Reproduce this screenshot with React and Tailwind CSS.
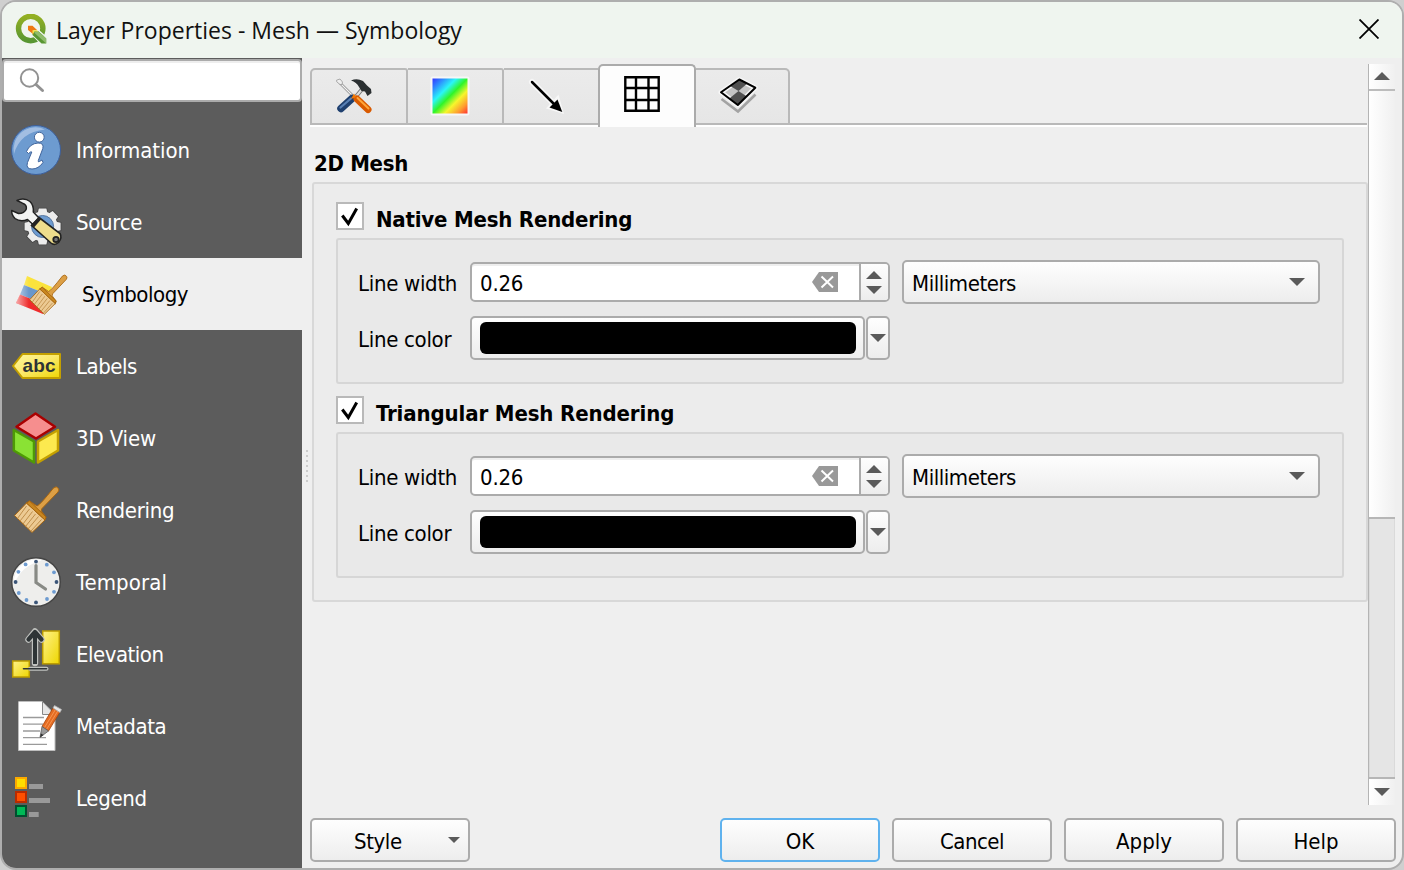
import React from "react";

const OUTLINE = "border-2 border-[#ababab]";
const FACE = "bg-linear-to-b from-[#fefefe] to-[#ededed]";

function Triangle({ up = false, className = "" }) {
  return (
    <svg viewBox="0 0 16 8" className={`w-4 h-2 shrink-0 ${className}`}>
      <path d={up ? "M0 8 8 0 16 8Z" : "M0 0H16L8 8Z"} fill="#5a5a5a" />
    </svg>
  );
}

/* ---------- sidebar icons ---------- */

function InfoIcon() {
  return (
    <g>
      <circle cx="36" cy="36" r="24.5" fill="#6d9bd0" stroke="#3c5f9c" />
      <path d="M14 40A22 22 0 0 1 45 15.5Q20 18 14 40Z" fill="#b4cae8" opacity=".75" />
      <g fill="#fff" stroke="#41659c" strokeWidth="1">
        <circle cx="39.3" cy="23.2" r="4.9" />
        <path d="M26.500 37.500Q30 29.500 38 29Q44.300 29 42.800 34.500L38.300 46.500Q37.800 48.500 39.500 47.500L42 46 43 48.500Q38.500 55 32 55Q25.500 55 27.500 48.500L31.800 38Q31.500 36.800 28.500 39.500Z" />
      </g>
    </g>
  );
}

const TEETH = [0, 45, 90, 135, 180, 225, 270, 315];

function SourceIcon() {
  return (
    <g>
      <g fill="#444" stroke="#444" strokeWidth="1.600">
        <circle cx="42.600" cy="40.500" r="15" />
        {TEETH.map((a) => <path key={a} d="M37.800 27 38.800 22.500H46.400L47.400 27Z" transform={`rotate(${a} 42.600 40.500)`} />)}
      </g>
      <g fill="#ececec">
        <circle cx="42.600" cy="40.500" r="15" />
        {TEETH.map((a) => <path key={a} d="M37.800 27 38.800 22.500H46.400L47.400 27Z" transform={`rotate(${a} 42.600 40.500)`} />)}
      </g>
      <circle cx="42.600" cy="40.500" r="11" fill="#6d9bd0" stroke="#54759f" />
      <path d="M17 14.500Q24 11 30 15.500Q34 19.500 33.300 26L39 32 33 38.500 27.500 33.500Q20.500 36.500 15 32.500Q11.500 29 11.700 24.500L18.500 27.500Q24.500 27.500 26.300 23Q27 18.500 22.500 17.200Z" fill="#f2f3f2" stroke="#222" strokeWidth="1.500" strokeLinejoin="round" />
      <path d="M39 31.500 60 47.500Q62.500 52 58.500 56.500 54.500 60 51 57L31.500 39.500Z" fill="#eedd8c" stroke="#222" strokeWidth="1.600" />
      <path d="M38.500 31.500 41 33.500 34 41.500 31.500 39Z" fill="#222" />
      <circle cx="56" cy="53.500" r="2.700" fill="#777" stroke="#222" strokeWidth="1.800" />
    </g>
  );
}

function Brush() {
  return (
    <g stroke="#a76510" strokeWidth="1">
      <path d="M37 32Q40 31 53.500 14 56.500 11.500 58.500 14.500 59.500 16 58 18L42 34.500Q40.500 36.500 42 38L46 43 45 46 26.500 29 29.500 27 34 30Z" fill="#dc9f45" />
      <path d="M26.500 29 45 46 32 58.500 14.500 41.500Z" fill="#ecca93" />
      <path d="M26.500 29 29.500 27 46 43 45 46Z" fill="#c8861f" />
      <path d="M26.500 32 17.500 44.500M29.500 35 20 47M32.500 37.500 23 50M35.500 40 25.500 52.500M38.500 42.500 28 55M41.500 45.500 31 57" fill="none" stroke="#b98742" strokeWidth=".9" />
    </g>
  );
}

function SymbologyIcon() {
  return (
    <g>
      <defs>
        <linearGradient id="flagFade" x1="0" x2=".6">
          <stop offset="0" stopColor="#fff" stopOpacity=".6" />
          <stop offset=".6" stopColor="#fff" stopOpacity="0" />
        </linearGradient>
      </defs>
      <path d="M27 18 52 29 49 37 24 27Z" fill="#fbe33c" />
      <path d="M24 27 49 37 46 47 20 36.500Z" fill="#6a97cb" />
      <path d="M20 36.500 46 47 43 56 16 45Z" fill="#ee2b2b" />
      <path d="M27 18 52 29 43 56 16 45Z" fill="url(#flagFade)" />
      <g transform="translate(17.500 6) scale(.84 .86)"><Brush /></g>
    </g>
  );
}

function LabelsIcon() {
  return (
    <g>
      <defs>
        <linearGradient id="tagFill" x1="0" y1="0" x2="1" y2="1">
          <stop offset="0" stopColor="#fff6a0" />
          <stop offset=".5" stopColor="#fbe96b" />
          <stop offset="1" stopColor="#eed600" />
        </linearGradient>
      </defs>
      <path d="M13 36 22.500 24H60V48H22.500Z" fill="url(#tagFill)" stroke="#c4a000" strokeWidth="2" strokeLinejoin="round" />
      <text x="39" y="41.600" textAnchor="middle" textLength="33" fontFamily="Liberation Sans, sans-serif" fontWeight="700" fontSize="19" fill="#2e3436">abc</text>
    </g>
  );
}

function CubeIcon() {
  return (
    <g strokeWidth="2.500" strokeLinejoin="round">
      <path d="M13.800 28 34 39.500V60.500L13.800 48.500Z" fill="#8ae234" stroke="#4e9a06" />
      <path d="M58 28 38 39.500V60.500L58 48.500Z" fill="#fce94f" stroke="#c4a000" />
      <path d="M35.500 11.500 55 24.700 36 36.500 16.500 24.700Z" fill="#f68e8e" stroke="#a90000" />
    </g>
  );
}

function ClockIcon() {
  return (
    <g>
      <circle cx="36" cy="36" r="24.300" fill="#eeeeec" stroke="#454545" strokeWidth="1.500" />
      <path d="M14 38A22 22 0 0 1 42 14.500Q22 19 14 38Z" fill="#fff" />
      <g fill="#6d9bd0">
        <circle cx="46.800" cy="18.700" r="1.900" /><circle cx="54" cy="26.300" r="1.900" />
        <circle cx="54" cy="45.800" r="1.900" /><circle cx="47" cy="53" r="1.900" />
        <circle cx="26.500" cy="54" r="1.900" /><circle cx="18.800" cy="47" r="1.900" />
        <circle cx="18.400" cy="25.800" r="1.900" /><circle cx="25.600" cy="18.400" r="1.900" />
      </g>
      <g fill="#3b5578">
        <circle cx="36" cy="15.600" r="1.900" /><circle cx="56.500" cy="36" r="1.900" />
        <circle cx="36" cy="56.400" r="1.900" /><circle cx="15.600" cy="36" r="1.900" />
      </g>
      <path d="M36 19.500V36.500L45.500 43" fill="none" stroke="#888a85" strokeWidth="3.200" strokeLinecap="round" />
    </g>
  );
}

function ElevationIcon() {
  return (
    <g>
      <defs>
        <linearGradient id="blockFill" x1="0" y1="0" x2="1" y2="1">
          <stop offset="0" stopColor="#fff28a" />
          <stop offset="1" stopColor="#eed600" />
        </linearGradient>
      </defs>
      <g fill="url(#blockFill)" stroke="#bb9b00" strokeWidth="1.500">
        <rect x="42.700" y="13" width="16.600" height="32.800" />
        <rect x="12.700" y="43" width="16.600" height="16" />
      </g>
      <g fill="none" strokeLinecap="round" strokeLinejoin="round">
        <path d="M35 45V15M28.500 21.500 35 13.500 41.500 21.500" stroke="#bfc1be" strokeWidth="6.400" />
        <path d="M30 50.700H46.500" stroke="#bfc1be" strokeWidth="4" />
        <path d="M23.500 50.700H46.500" stroke="#2e3436" strokeWidth="1.600" />
        <path d="M35 46V15" stroke="#2e3436" strokeWidth="4" strokeLinecap="butt" />
        <path d="M28.500 21.500 35 14 41.500 21.500" stroke="#2e3436" strokeWidth="4.200" />
      </g>
    </g>
  );
}

function MetadataIcon() {
  return (
    <g>
      <path d="M18.500 12Q18.500 11.500 19 11.500H42.500L55 24V60.500H18.500Z" fill="#fff" stroke="#bdbdbd" />
      <path d="M42.500 11.500V24.500H55Z" fill="#e6e6e6" stroke="#888" strokeWidth="1" />
      <path d="M23 27.500H44M23 34.200H43M23 41H40M23 47.700H46M23 54.300H47" stroke="#9a9a9a" strokeWidth="1.300" />
      <path d="M42 36.500 53 18 60 22 48.500 41Z" fill="#e56c22" stroke="#a3420b" strokeWidth=".8" />
      <path d="M44.500 37.500 55.500 19.500M46.800 39 57.800 21" stroke="#f79553" strokeWidth="1" />
      <path d="M53 18 54.500 15.500 61.500 19.500 60 22.500Z" fill="#e8e8e8" stroke="#aaa" strokeWidth=".8" />
      <path d="M42 36.500 48.500 41 40 47.300Z" fill="#9a9a9a" stroke="#5b5b5b" strokeWidth=".8" />
      <path d="M41 43.500 43.500 45 40 47.500Z" fill="#333" />
    </g>
  );
}

function LegendIcon() {
  return (
    <g>
      <g strokeWidth="2">
        <rect x="16" y="16" width="10" height="10" fill="#ffde00" stroke="#fba900" />
        <rect x="16" y="30" width="10" height="10" fill="#ff4f00" stroke="#b92b00" />
        <rect x="16" y="44" width="10" height="10" fill="#00b956" stroke="#00502f" />
      </g>
      <path d="M29 22H43V27H29ZM29 36H50V41H29ZM29 50H38.700V55H29Z" fill="#999" />
    </g>
  );
}

const PAGES = [
  { label: "Information", Icon: InfoIcon, spacing: "tracking-[-0.05px]" },
  { label: "Source", Icon: SourceIcon, spacing: "tracking-[-0.3px]" },
  { label: "Symbology", Icon: SymbologyIcon, spacing: "tracking-[-0.45px]", selected: true },
  { label: "Labels", Icon: LabelsIcon, spacing: "tracking-[-0.5px]" },
  { label: "3D View", Icon: CubeIcon, spacing: "tracking-[-0.15px]" },
  { label: "Rendering", Icon: Brush, spacing: "tracking-[-0.3px]" },
  { label: "Temporal", Icon: ClockIcon, spacing: "tracking-[0.1px]" },
  { label: "Elevation", Icon: ElevationIcon, spacing: "tracking-[-0.5px]" },
  { label: "Metadata", Icon: MetadataIcon, spacing: "tracking-[-0.45px]" },
  { label: "Legend", Icon: LegendIcon, spacing: "tracking-[-0.3px]" },
];

function Sidebar() {
  return (
    <aside className="w-[300px] shrink-0 flex flex-col bg-[#5c5c5c]">
      <div className="h-11 pt-px shrink-0">
        <div className={`h-full bg-white rounded-[4px] ${OUTLINE} shadow-[inset_0_2px_0_#eeeeee] flex items-center pl-[14px]`}>
          <svg viewBox="0 0 28 28" className="w-7 h-7" fill="none" stroke="#929292">
            <circle cx="11.500" cy="11" r="8.700" strokeWidth="2" />
            <path d="M18 17.500 24.500 23.500" strokeWidth="3" strokeLinecap="round" />
          </svg>
        </div>
      </div>
      <nav className="pt-3 flex flex-col">
        {PAGES.map(({ label, Icon, spacing, selected }) => (
          <div
            key={label}
            className={`h-[72px] flex items-center ${selected ? "bg-[#efefef] text-black gap-[14px]" : "text-white gap-2"}`}
          >
            <svg viewBox="2 0 66 72" className="w-[66px] h-[72px] shrink-0"><Icon /></svg>
            <span className={`pt-0.5 ${spacing}`}>{label}</span>
          </div>
        ))}
      </nav>
    </aside>
  );
}

/* ---------- tab icons ---------- */

function ToolsIcon() {
  return (
    <g strokeLinecap="round">
      <path d="M340 83 355 98" stroke="#888" strokeWidth="2.600" />
      <path d="M340 83 355 98" stroke="#f2f2f2" strokeWidth="1.200" />
      <path d="M337 80 340 79 342.500 82 342 84.500 340 84.500 337 82Z" fill="#eee" stroke="#999" strokeWidth=".8" />
      <path d="M363 88 354 99" stroke="#777" strokeWidth="4" />
      <path d="M363 88 354 99" stroke="#ddd" strokeWidth="2" />
      <path d="M351 80.500Q357 78 363 81L367 85.500 371 89 371.500 93 367.500 96 365 91.500 361.500 91 359 87Q356.500 82 351 80.500Z" fill="#2b3032" />
      <path d="M352 98.500 341 108.500" stroke="#1f406f" strokeWidth="7.500" />
      <path d="M351 98.500 340.500 107.500" stroke="#5980b5" strokeWidth="2.200" />
      <path d="M357 99 368 109.500" stroke="#d95a00" strokeWidth="7" />
      <path d="M357.500 98 368.500 108.500" stroke="#ffa53a" strokeWidth="2" />
      <path d="M351 99 354 93.500 356 97Z" fill="#f57900" />
    </g>
  );
}

function ContoursIcon() {
  return (
    <g>
      <defs>
        <linearGradient id="ramp" x1="0" y1="0" x2="1" y2="1">
          <stop offset="0" stopColor="#3535ff" />
          <stop offset=".15" stopColor="#2f86ff" />
          <stop offset=".34" stopColor="#2af5f7" />
          <stop offset=".5" stopColor="#30f52a" />
          <stop offset=".67" stopColor="#f6f62c" />
          <stop offset=".85" stopColor="#ff9a30" />
          <stop offset="1" stopColor="#ff3232" />
        </linearGradient>
      </defs>
      <rect x="430.500" y="76.500" width="39" height="39" rx="2" fill="#f7f7f7" />
      <rect x="432.500" y="78.500" width="35" height="35" fill="url(#ramp)" />
    </g>
  );
}

function VectorsIcon() {
  return (
    <g strokeLinecap="round">
      <path d="M532 82 555 105" stroke="#f7f7f7" strokeWidth="6" />
      <path d="M564 114 546 108.500 558.500 94.500Z" fill="#f7f7f7" />
      <path d="M532 82 556 106" stroke="#000" strokeWidth="2.500" />
      <path d="M562.300 112 549.500 107.500 557.500 99.500Z" fill="#000" />
    </g>
  );
}

function MeshGridIcon() {
  return (
    <path d="M625.300 77.300H658.700V110.700H625.300ZM636 77V111M648.500 77V111M625 88H659M625 100H659" fill="none" stroke="#000" strokeWidth="2.400" />
  );
}

function AveragingIcon() {
  return (
    <g>
      <path d="M721.500 99 738 111.500 755.500 94.500" fill="none" stroke="#a3a3a3" strokeWidth="2.600" />
      <path d="M739.300 79.500 755.300 87.700 737.800 105 721 92.300Z" fill="#c4c4c4" stroke="#f7f7f7" strokeWidth="5" strokeLinejoin="round" />
      <path d="M739.300 79.500 747.300 83.600 738.500 91 730.200 86Z" fill="#505050" />
      <path d="M738.500 91 746.500 96.300 737.800 105 729.400 98.600Z" fill="#505050" />
      <path d="M739.300 79.500 755.300 87.700 737.800 105 721 92.300Z" fill="none" stroke="#000" strokeWidth="2" strokeLinejoin="round" />
    </g>
  );
}

function Tab({ className, viewBox, size, children }) {
  return (
    <div className={`shrink-0 ${className}`}>
      <svg viewBox={viewBox} className={`block ${size}`}>{children}</svg>
    </div>
  );
}

function Tabs() {
  const idle = "mt-1 h-[57px] border-[#b9b9b9] bg-linear-to-b from-[#ebebeb] to-[#e6e6e6] border-t-2 border-b-2";
  return (
    <div className="h-[63px] w-[1057px] flex items-start bg-[linear-gradient(#b9b9b9,#b9b9b9),linear-gradient(#fff,#fff)] bg-[length:100%_2px,100%_2px] bg-[position:0_59px,0_61px] bg-no-repeat">
      <Tab className={`${idle} w-[98px] border-x-2 rounded-tl-[5px] rounded-tr-[3px]`} viewBox="312 70 94 53" size="w-[94px] h-[53px]"><ToolsIcon /></Tab>
      <Tab className={`${idle} w-[96px] border-r-2 rounded-tr-[3px]`} viewBox="408 70 94 53" size="w-[94px] h-[53px]"><ContoursIcon /></Tab>
      <Tab className={`${idle} w-[94px]`} viewBox="504 70 94 53" size="w-[94px] h-[53px]"><VectorsIcon /></Tab>
      <Tab className="w-[98px] h-[63px] border-2 border-b-0 border-[#ababab] rounded-t-[5px] bg-[#fdfdfd]" viewBox="600 66 94 60" size="w-[94px] h-[60px]"><MeshGridIcon /></Tab>
      <Tab className={`${idle} w-[94px] border-r-2 rounded-tr-[5px]`} viewBox="696 70 92 53" size="w-[92px] h-[53px]"><AveragingIcon /></Tab>
    </div>
  );
}

/* ---------- mesh settings ---------- */

function SpinBox({ value }) {
  return (
    <div className={`w-[420px] h-10 mt-0.5 flex items-center bg-white rounded-[5px] overflow-hidden ${OUTLINE} shadow-[inset_0_2px_0_#eeeeee]`}>
      <span className="pl-2 pt-1 flex-1 tracking-[-0.2px]">{value}</span>
      <svg viewBox="0 0 26 20" className="w-[26px] h-5 mr-[21px]">
        <path d="M0 10 7 0H26V20H7Z" fill="#999" />
        <path d="M9.500 4.500 21 15.500M21 4.500 9.500 15.500" stroke="#fff" strokeWidth="2" />
      </svg>
      <div className={`w-[29px] h-full border-l-2 border-[#ababab] pr-px flex flex-col items-center justify-center gap-[7px] ${FACE}`}>
        <Triangle up />
        <Triangle />
      </div>
    </div>
  );
}

function MeshGroup({ title, spacing }) {
  return (
    <section className="flex flex-col">
      <div className="h-9 flex items-start">
        <div className="w-7 h-7 bg-white border-2 border-[#b9b9b9] shrink-0">
          <svg viewBox="0 0 24 24" className="w-6 h-6">
            <path d="M4.300 11.500 10.300 19.500 18.700 4.500" fill="none" stroke="#000" strokeWidth="3" />
          </svg>
        </div>
        <h3 className={`ml-3 mt-0.5 font-bold leading-8 ${spacing}`}>{title}</h3>
      </div>
      <div className="w-[1008px] h-[146px] border-2 border-[#d6d6d6] rounded-[3px] bg-[#e9e9e9] pl-5 pt-5 flex flex-col gap-3">
        <div className="flex h-11">
          <span className="w-28 leading-[48px] tracking-[-0.3px]">Line width</span>
          <SpinBox value="0.26" />
          <div className={`ml-3 w-[418px] h-11 rounded-[5px] flex items-center justify-between pl-2 pr-[13px] ${OUTLINE} ${FACE}`}>
            <span className="pt-1 tracking-[-0.45px]">Millimeters</span>
            <Triangle />
          </div>
        </div>
        <div className="flex h-11">
          <span className="w-28 leading-[48px] tracking-[-0.3px]">Line color</span>
          <div className={`w-[395px] h-11 rounded-[5px] px-2 py-1 ${OUTLINE} ${FACE}`}>
            <div className="w-[376px] h-8 bg-black rounded-[6px]" />
          </div>
          <div className={`ml-px w-6 h-11 rounded-[5px] flex items-center justify-center ${OUTLINE} ${FACE}`}>
            <Triangle />
          </div>
        </div>
      </div>
    </section>
  );
}

function ScrollBar() {
  return (
    <div className="w-[27px] h-[741px] mt-[6px] shrink-0 flex flex-col border-l border-[#b4b4b4]">
      <div className="h-[27px] shrink-0 border-b-2 border-[#bcbcbc] bg-linear-to-r from-white to-[#f0f0f0] flex items-center justify-center pb-px">
        <Triangle up />
      </div>
      <div className="h-[428px] shrink-0 border-b-2 border-[#b6b6b6] bg-linear-to-r from-white to-[#f0f0f0]" />
      <div className="flex-1 bg-[#e5e5e5] border-x border-[#dadada]" />
      <div className="h-[28px] shrink-0 border-t-2 border-[#b6b6b6] bg-linear-to-r from-white to-[#f0f0f0] flex items-center justify-center">
        <Triangle />
      </div>
    </div>
  );
}

function PushButton({ children, primary = false, spacing = "" }) {
  return (
    <button className={`w-40 h-11 rounded-[5px] border-2 pt-1 ${primary ? "border-[#5fb2ee]" : "border-[#ababab]"} ${FACE} ${spacing}`}>
      {children}
    </button>
  );
}

function Logo() {
  return (
    <svg viewBox="15 14 32 32" className="w-8 h-8 shrink-0">
      <defs>
        <linearGradient id="ring" x1="0" y1="0" x2="0" y2="1">
          <stop offset="0" stopColor="#93b023" />
          <stop offset="1" stopColor="#589632" />
        </linearGradient>
      </defs>
      <circle cx="30.700" cy="28.500" r="12.200" fill="none" stroke="url(#ring)" strokeWidth="5.400" />
      <path d="M31 33.500 41.500 44M38.500 30.500 47.500 38.500" stroke="#eff5ef" strokeWidth="1.500" />
      <path d="M32.500 31H38L46.200 38.500V43.500H41.500L32.500 35Z" fill="#589632" />
      <path d="M38 31 46.200 38.500V43.500L34 32.500Z" fill="#8fbc6b" />
      <path d="M28 25.700H32.500L37.300 30.300H33.500V34.500L28 30Z" fill="#ee7913" />
      <path d="M32.500 34.500V30.200H37.300L38 31.500H34.500Z" fill="#f0e64a" />
    </svg>
  );
}

function TitleBar() {
  return (
    <header className="h-14 shrink-0 flex items-center bg-[#eff5ef] pl-[13px] pr-[23px]">
      <Logo />
      <h1 className="ml-[9px] flex-1 font-['Open_Sans','Noto_Sans',sans-serif] [font-stretch:normal] text-[23px] leading-8 tracking-[0px] text-[#111]">Layer Properties - Mesh — Symbology</h1>
      <svg viewBox="0 0 20 20" className="w-5 h-5 mb-0.5" stroke="#000" strokeWidth="1.800" fill="none">
        <path d="M.5.500 19.500 19.500M19.500.500.500 19.500" />
      </svg>
    </header>
  );
}

export default function App() {
  return (
    <div className="w-[1404px] h-[870px] bg-[#cfcfcf] overflow-hidden font-['DejaVu_Sans_Condensed','DejaVu_Sans',sans-serif] [font-stretch:condensed] text-[22px] leading-7 text-black">
      <div className="w-[1404px] h-[870px] border-2 border-[#aeaeae] rounded-[16px] overflow-hidden flex flex-col bg-[#efefef]">
        <TitleBar />
        <div className="flex-1 flex min-h-0">
          <Sidebar />
          <div className="w-2 shrink-0 flex flex-col items-center pt-[392px] pl-0.5 gap-[3px]">
            {[0, 1, 2, 3, 4, 5, 6].map((dot) => <i key={dot} className="w-0.5 h-0.5 bg-[#cccccc]" />)}
          </div>
          <main className="flex-1 flex flex-col">
            <div className="h-[747px] flex">
              <div className="w-[1058px] pt-[6px] flex flex-col">
                <Tabs />
                <h2 className="ml-1 mt-[23px] h-8 font-bold tracking-[-0.3px]">2D Mesh</h2>
                <div className="ml-0.5 w-[1056px] h-[420px] border-2 border-[#d8d8d8] rounded-[3px] bg-[#ececec] pl-[22px] pt-[18px] flex flex-col gap-3">
                  <MeshGroup title="Native Mesh Rendering" spacing="tracking-[-0.2px]" />
                  <MeshGroup title="Triangular Mesh Rendering" spacing="tracking-[-0.12px]" />
                </div>
              </div>
              <ScrollBar />
            </div>
            <footer className="mt-[13px] pr-[6px] flex justify-between">
              <button className={`w-40 h-11 rounded-[5px] flex items-center pl-[42px] pt-0.5 ${OUTLINE} ${FACE}`}>
                <span className="pt-0.5 tracking-[-0.4px]">Style</span>
                <svg viewBox="0 0 12 6" className="w-3 h-1.5 ml-auto mr-2 mb-[3px]"><path d="M0 0H12L6 6Z" fill="#5a5a5a" /></svg>
              </button>
              <div className="flex gap-3">
                <PushButton primary>OK</PushButton>
                <PushButton spacing="tracking-[-0.5px]">Cancel</PushButton>
                <PushButton>Apply</PushButton>
                <PushButton>Help</PushButton>
              </div>
            </footer>
          </main>
        </div>
      </div>
    </div>
  );
}
